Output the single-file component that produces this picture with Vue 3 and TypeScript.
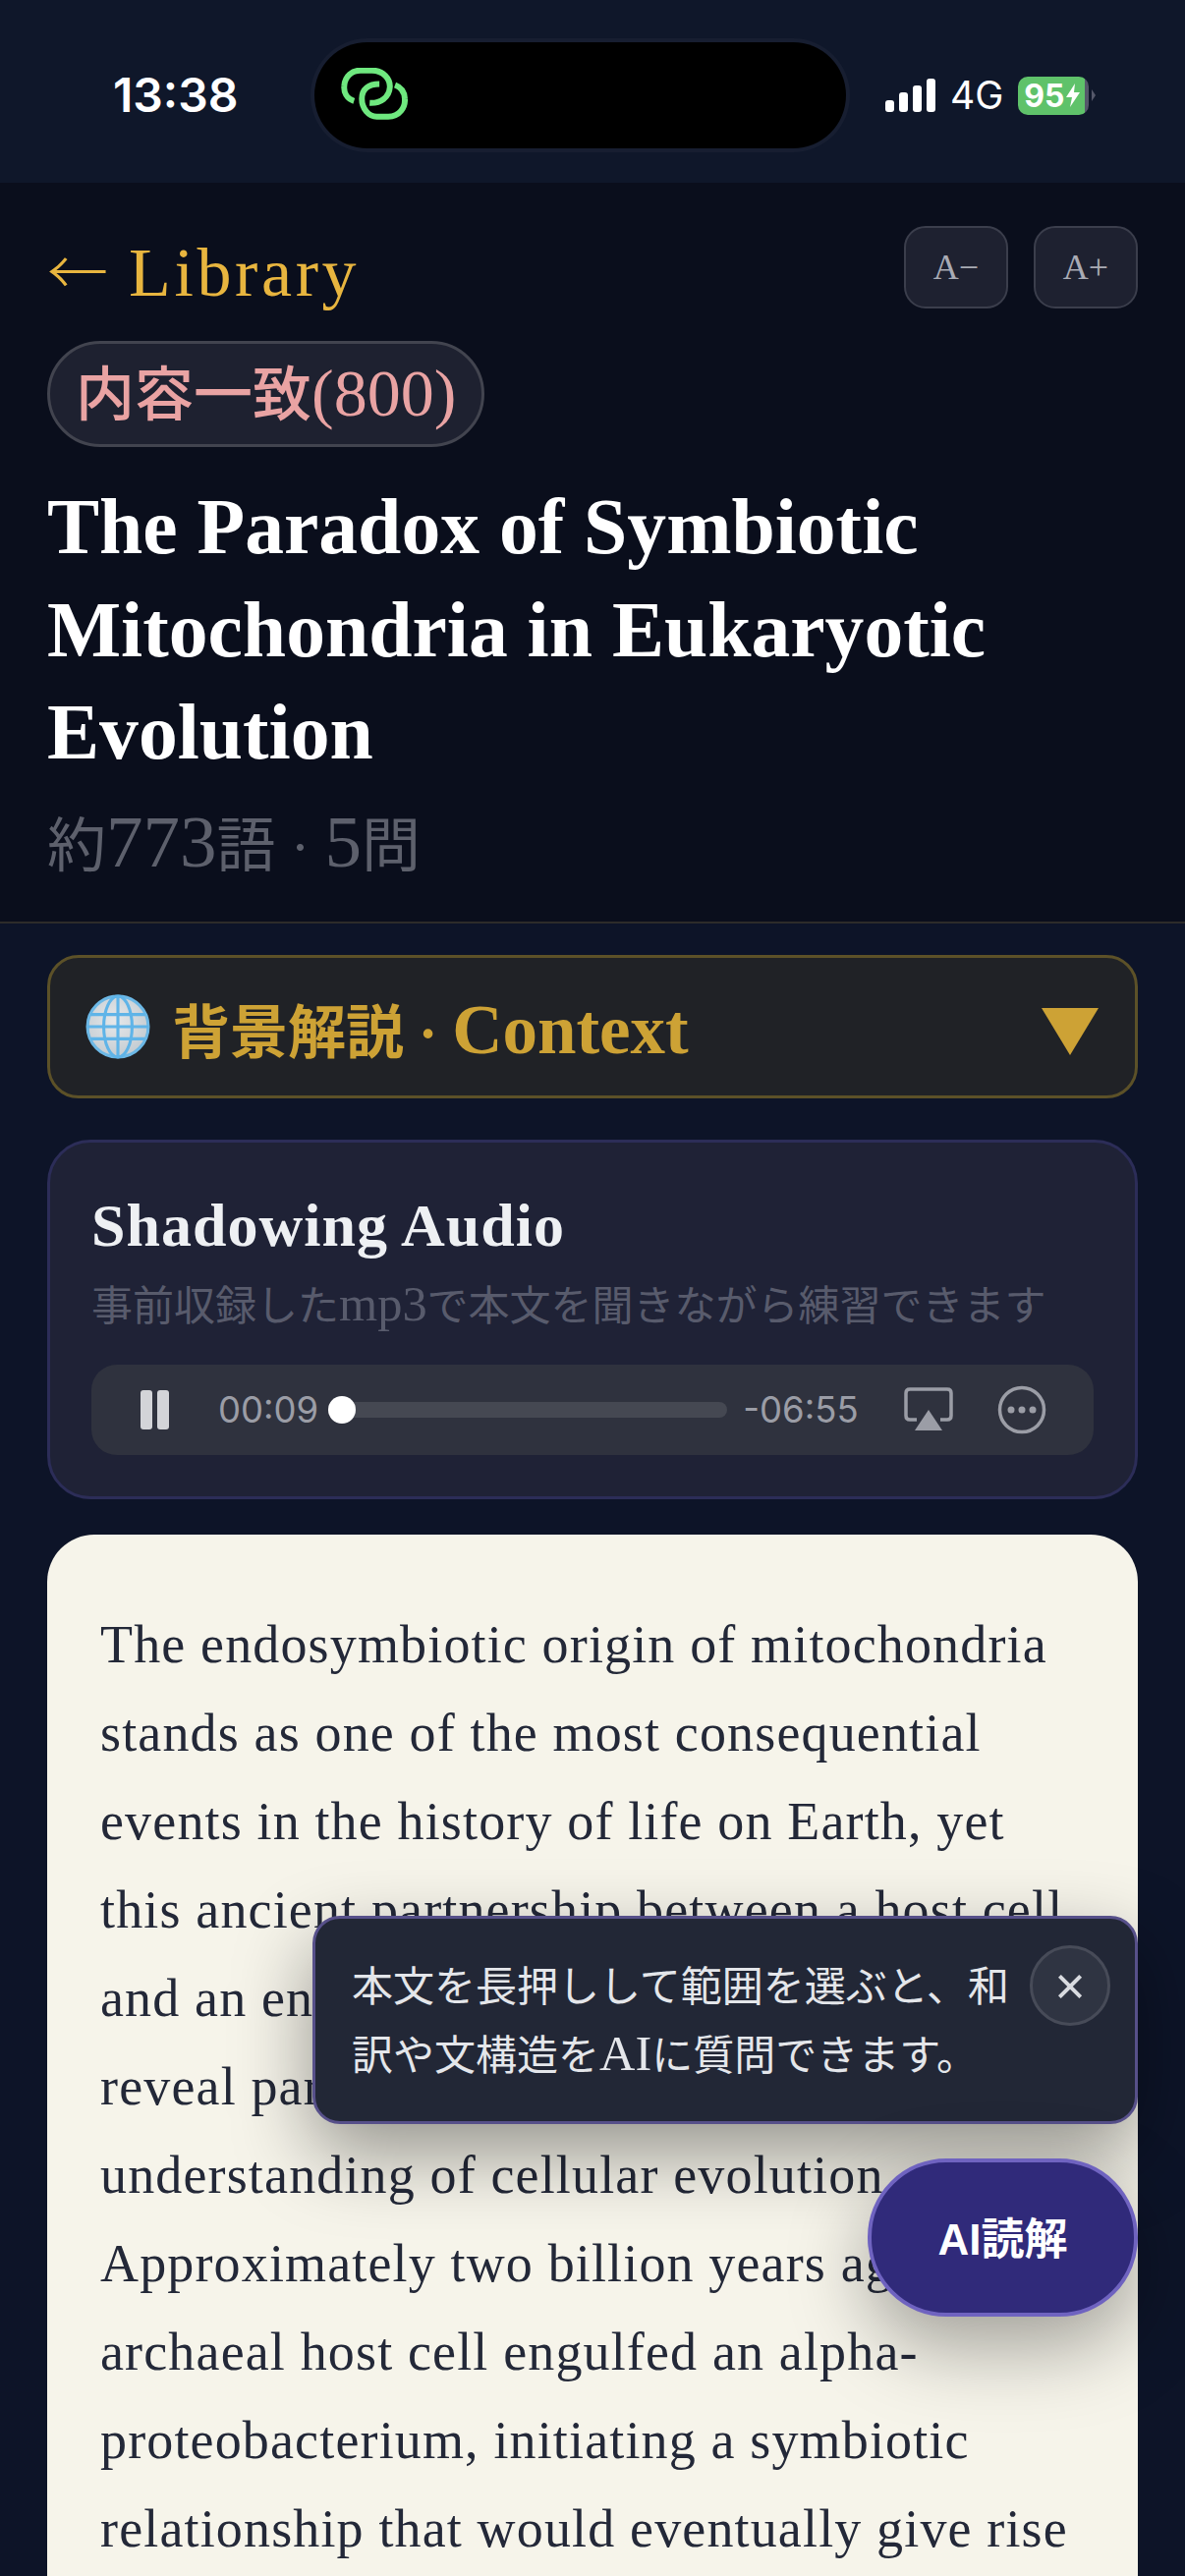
<template>
  <div class="screen">
    <div class="status-bar">
      <span class="time">13:38</span>
      <div class="island">
        <svg class="link-icon" viewBox="140 150 205 160" fill="none" stroke="#6fe87f" stroke-width="18" stroke-linecap="butt">
          <path d="M180 252C157 245 148 225 150 205C152 175 175 158 200 158L235 158C270 158 292 185 290 210C288 240 262 260 228 258" />
          <path d="M258 200C225 200 204 215 204 245C204 275 225 300 250 300L285 300C320 300 338 272 336 245C335 225 325 210 306 203" />
        </svg>
      </div>
      <div class="status-right">
        <div class="signal">
          <i v-for="h in signalBars" :key="h" :style="{ height: h + 'px' }"></i>
        </div>
        <span class="net">4G</span>
        <div class="battery">
          <span>95</span>
          <svg viewBox="0 0 14 24" width="14" height="24"><path d="M9 0L0 14H6L4 24L14 9H8Z" fill="#fff" /></svg>
        </div>
        <i class="battery-cap"></i>
      </div>
    </div>

    <header class="head">
      <div class="nav">
        <a class="back"><span class="arrow">←</span> Library</a>
        <div class="font-btns">
          <button>A−</button>
          <button>A+</button>
        </div>
      </div>
      <span class="tag">内容一致<span class="tag-num">(800)</span></span>
      <h1>The Paradox of Symbiotic Mitochondria in Eukaryotic Evolution</h1>
      <p class="meta">約<span class="num">773</span>語 · <span class="num">5</span>問</p>
    </header>

    <main class="content">
      <div class="context">
        <svg class="globe" viewBox="0 0 64 64">
          <defs>
            <radialGradient id="globeFill" cx="45%" cy="40%" r="60%">
              <stop offset="0" stop-color="#e6e8ea" />
              <stop offset="1" stop-color="#c4ccd2" />
            </radialGradient>
          </defs>
          <circle cx="32" cy="32" r="30" fill="url(#globeFill)" stroke="#6cb8e6" stroke-width="3" />
          <g fill="none" stroke="#5fb4e8" stroke-width="3">
            <ellipse cx="32" cy="32" rx="14" ry="30" />
            <path d="M32 2V62M5 20H59M2 32H62M5 44H59" />
          </g>
        </svg>
        <span class="context-label">背景解説 · <span class="context-en">Context</span></span>
        <i class="caret"></i>
      </div>

      <section class="audio">
        <h2>Shadowing Audio</h2>
        <p>事前収録した<span class="num">mp3</span>で本文を聞きながら練習できます</p>
        <div class="player">
          <svg class="pause" viewBox="0 0 30 40" width="30" height="40">
            <rect x="0" y="0" width="12" height="40" rx="3" />
            <rect x="17" y="0" width="12" height="40" rx="3" />
          </svg>
          <span class="cur">00:09</span>
          <div class="track"><i class="knob"></i></div>
          <span class="rem">-06:55</span>
          <svg class="airplay" viewBox="0 0 50 46" width="50" height="46" fill="none">
            <path d="M13 33H6Q2 33 2 29V6Q2 2 6 2H44Q48 2 48 6V29Q48 33 44 33H37" stroke="#9b9da6" stroke-width="3.5" />
            <path d="M25 23L39 44H11Z" fill="#9b9da6" />
          </svg>
          <svg class="more" viewBox="0 0 50 50" width="50" height="50" fill="none">
            <circle cx="25" cy="25" r="22.5" stroke="#9b9da6" stroke-width="3.5" />
            <circle cx="14" cy="25" r="3.5" fill="#9b9da6" />
            <circle cx="25" cy="25" r="3.5" fill="#9b9da6" />
            <circle cx="36" cy="25" r="3.5" fill="#9b9da6" />
          </svg>
        </div>
      </section>

      <article class="reading">
        <p v-for="line in articleLines" :key="line">{{ line }}</p>
      </article>
    </main>

    <div class="tip">
      <p>本文を長押しして範囲を選ぶと、和<br />訳や文構造を<span class="num">AI</span>に質問できます。</p>
      <button class="tip-close" aria-label="close">×</button>
    </div>
    <button class="fab">AI読解</button>
  </div>
</template>

<script setup lang="ts">
const signalBars: number[] = [12, 20, 27, 34]

const articleLines: string[] = [
  'The endosymbiotic origin of mitochondria',
  'stands as one of the most consequential',
  'events in the history of life on Earth, yet',
  'this ancient partnership between a host cell',
  'and an engulfed bacterium continues to',
  'reveal paradoxes that challenge our',
  'understanding of cellular evolution.',
  'Approximately two billion years ago, an',
  'archaeal host cell engulfed an alpha-',
  'proteobacterium, initiating a symbiotic',
  'relationship that would eventually give rise',
]
</script>

<style>
html,
body {
  margin: 0;
  background: #0d1428;
}
</style>

<style scoped>
.screen {
  position: relative;
  width: 1206px;
  height: 2622px;
  overflow: hidden;
  background: #0d1428;
  font-family: "Liberation Serif", "Noto Sans CJK JP", serif;
}
.num {
  font-size: 1.25em;
  line-height: 1;
}

.status-bar {
  height: 186px;
  box-sizing: border-box;
  padding: 43px 40px 0 115px;
  display: flex;
  align-items: flex-start;
  background: #0f172a;
  font-family: "Inter", "Liberation Sans", sans-serif;
  color: #fff;
}
.time {
  width: 205px;
  margin-top: 27px;
  font-size: 48px;
  line-height: 54px;
  font-weight: 600;
}
.island {
  width: 541px;
  height: 108px;
  border-radius: 54px;
  background: #000;
  box-shadow: 0 0 0 4px #171e31;
  display: flex;
  align-items: center;
  padding-left: 27px;
  box-sizing: border-box;
}
.link-icon {
  width: 68px;
  height: 53px;
  margin-top: -4px;
}
.status-right {
  margin-left: 40px;
  margin-top: 34px;
  display: flex;
  align-items: center;
}
.signal {
  display: flex;
  align-items: flex-end;
  gap: 5px;
  height: 34px;
}
.signal i {
  width: 9px;
  border-radius: 3px;
  background: #fff;
}
.net {
  margin-left: 15px;
  font-size: 39px;
  font-weight: 400;
  line-height: 40px;
}
.battery {
  margin-left: 15px;
  width: 72px;
  height: 39px;
  box-sizing: border-box;
  padding-left: 6px;
  border-radius: 10px;
  background: linear-gradient(90deg, #5fc26a 94%, #55586a 94%);
  display: flex;
  align-items: center;
  gap: 1px;
  font-size: 32px;
  font-weight: 700;
}
.battery-cap {
  width: 0;
  height: 0;
  margin-left: 3px;
  border-left: 4px solid #55586a;
  border-top: 6px solid transparent;
  border-bottom: 6px solid transparent;
}

.head {
  background: #0a0e1c;
  border-bottom: 2px solid #2d2c2a;
  padding: 44px 48px 24px;
  height: 754px;
  box-sizing: border-box;
}
.nav {
  display: flex;
  justify-content: space-between;
  align-items: flex-start;
}
.back {
  margin-top: 2px;
  font-size: 70px;
  line-height: 84px;
  color: #e8b53f;
  letter-spacing: 3.6px;
}
.arrow {
  font-family: "Noto Sans CJK JP", sans-serif;
  font-weight: 300;
  font-size: 62px;
  letter-spacing: 0;
}
.font-btns {
  display: flex;
  gap: 26px;
}
.font-btns button {
  width: 106px;
  height: 84px;
  border-radius: 22px;
  border: 2px solid #3b3e4c;
  background: #1e2130;
  color: #a9abb4;
  font: 36px "Liberation Serif", serif;
}
.tag {
  display: inline-block;
  margin-top: 27px;
  height: 108px;
  line-height: 106px;
  padding: 0 26px;
  box-sizing: border-box;
  border: 3px solid #42444f;
  border-radius: 54px;
  background: #1e2130;
  color: #e9a3a3;
  font-size: 60px;
  font-weight: 500;
}
.tag-num {
  font-size: 68px;
  line-height: 1;
}
h1 {
  margin: 29px 0 0;
  font-size: 79.6px;
  line-height: 104.5px;
  font-weight: 700;
  color: #fff;
}
.meta {
  margin: 21px 0 0;
  font-size: 60px;
  line-height: 84px;
  color: #5d606c;
}

.content {
  padding: 32px 48px 0;
}
.context {
  height: 146px;
  box-sizing: border-box;
  border: 3px solid #5c5128;
  border-radius: 32px;
  background: #202226;
  display: flex;
  align-items: center;
  padding: 0 37px 0 36px;
}
.globe {
  width: 66px;
  height: 66px;
}
.context-label {
  margin: 2px 0 0 22px;
  font-size: 59px;
  font-weight: 700;
  color: #cda235;
}
.context-en {
  font-size: 71px;
  line-height: 1;
}
.caret {
  margin-left: auto;
  margin-top: 10px;
  width: 0;
  height: 0;
  border-left: 29px solid transparent;
  border-right: 29px solid transparent;
  border-top: 48px solid #cda235;
}

.audio {
  margin-top: 42px;
  height: 366px;
  box-sizing: border-box;
  padding: 48px 42px 0;
  border: 3px solid #2c2d58;
  border-radius: 44px;
  background: #1f2236;
}
.audio h2 {
  margin: 0;
  font-size: 62px;
  line-height: 72px;
  letter-spacing: 1px;
  font-weight: 700;
  color: #eef0f3;
}
.audio p {
  margin: 17px 0 0;
  height: 60px;
  font-size: 42px;
  line-height: 60px;
  color: #585b6c;
}
.audio p .num {
  font-size: 1.2em;
}
.player {
  margin-top: 29px;
  height: 92px;
  border-radius: 26px;
  background: #2f323e;
  display: flex;
  align-items: center;
  padding: 0 48px 0 50px;
  font-family: "Inter", "Liberation Sans", sans-serif;
  font-size: 36.5px;
  color: #9b9da6;
}
.pause {
  fill: #d3d4d8;
}
.cur {
  margin-left: 49px;
}
.track {
  position: relative;
  margin-left: 24px;
  width: 392px;
  height: 16px;
  margin-right: 16px;
  border-radius: 8px;
  background: #454852;
}
.knob {
  position: absolute;
  left: -14px;
  top: -6px;
  width: 28px;
  height: 28px;
  border-radius: 50%;
  background: #fff;
}
.airplay {
  margin-left: auto;
}
.more {
  margin-left: 45px;
}

.reading {
  margin-top: 36px;
  min-height: 1100px;
  padding: 67px 54px 0;
  border-radius: 48px;
  background: #f6f4ea;
}
.reading p {
  margin: 0;
  white-space: nowrap;
  font-size: 54px;
  line-height: 90px;
  letter-spacing: 1.15px;
  color: #232838;
}

.tip {
  position: absolute;
  left: 318px;
  top: 1950px;
  width: 840px;
  height: 212px;
  box-sizing: border-box;
  padding: 35px 25px 0 37px;
  display: flex;
  justify-content: space-between;
  border: 3px solid #57508a;
  border-radius: 28px;
  background: #222736;
  box-shadow: 0 30px 80px rgba(0, 0, 0, 0.4);
}
.tip p {
  margin: 0;
  font-size: 42px;
  line-height: 70px;
  color: #e4e6ea;
  white-space: nowrap;
}
.tip .num {
  font-size: 1.2em;
}
.tip-close {
  width: 82px;
  height: 82px;
  margin-top: -8px;
  padding: 0;
  border: 3px solid #474b58;
  border-radius: 50%;
  background: #2f3442;
  color: #d9dbe0;
  font: 54px/70px "Liberation Sans", sans-serif;
}

.fab {
  position: absolute;
  left: 883px;
  top: 2197px;
  width: 275px;
  height: 161px;
  padding: 0 0 4px;
  border: 4px solid #6f63c0;
  border-radius: 80px;
  background: #302a7a;
  color: #fff;
  font-family: "Liberation Sans", "Noto Sans CJK JP", sans-serif;
  font-size: 44px;
  font-weight: 700;
  box-shadow: 0 30px 80px rgba(0, 0, 0, 0.35);
}
</style>
